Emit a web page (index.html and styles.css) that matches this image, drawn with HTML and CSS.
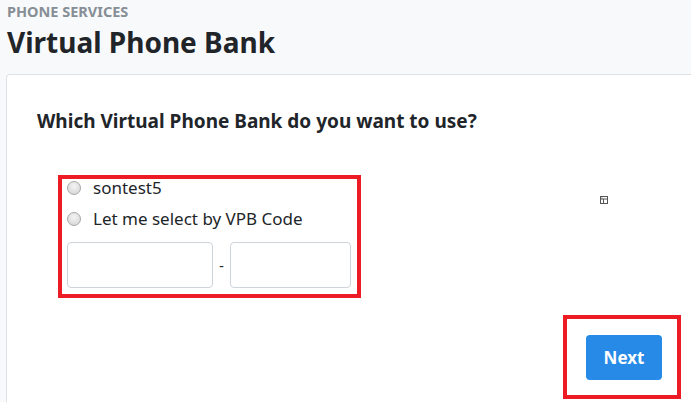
FILE: index.html
```html
<!DOCTYPE html>
<html lang="en">
<head>
    <meta charset="UTF-8">
    <meta name="viewport" content="width=device-width, initial-scale=1.0">
    <title>Virtual Phone Bank</title>
    <link rel="stylesheet" href="styles.css">
</head>
<body>
    <header class="page-header">
        <div class="eyebrow">Phone Services</div>
        <h1>Virtual Phone Bank</h1>
    </header>

    <form class="card" id="vpbForm">
        <h2 class="question">Which Virtual Phone Bank do you want to use?</h2>

        <div class="vpb-row">
            <div class="choices">
                <label class="radio-option">
                    <input type="radio" name="vpb" value="sontest5">
                    <span>sontest5</span>
                </label>
                <label class="radio-option">
                    <input type="radio" name="vpb" value="code">
                    <span>Let me select by VPB Code</span>
                </label>
                <div class="code-inputs">
                    <input type="text" class="code-input code-first" name="codeA">
                    <span class="dash">-</span>
                    <input type="text" class="code-input code-second" name="codeB">
                </div>
            </div>

            <svg class="tiny-icon" width="8" height="8" viewBox="0 0 8 8">
                <rect x="0.5" y="0.5" width="7" height="7" fill="none" stroke="#555" stroke-width="1"/>
                <line x1="0" y1="3" x2="8" y2="3" stroke="#555" stroke-width="1"/>
                <line x1="3.5" y1="3" x2="3.5" y2="8" stroke="#555" stroke-width="1"/>
                <rect x="1.5" y="1.5" width="1" height="1" fill="#555"/>
            </svg>
        </div>

        <div class="actions">
            <button type="submit" class="btn-next">Next</button>
        </div>
    </form>

    <!-- annotation boxes drawn over the screenshot -->
    <div class="highlight highlight-choices"></div>
    <div class="highlight highlight-next"></div>
</body>
</html>
```

FILE: styles.css
```css
body {
    font-family: "Noto Sans", "Open Sans", sans-serif;
    margin: 0;
    padding: 0;
    background-color: #f8f9fa;
    color: #212529;
    overflow: hidden;
}

.page-header {
    padding: 2px 7px 0;
    height: 74px;
    box-sizing: border-box;
}

.eyebrow {
    font-size: 14.5px;
    font-weight: bold;
    color: #868e96;
    text-transform: uppercase;
    line-height: 19px;
}

h1 {
    margin: 3px 0 0;
    font-size: 28px;
    line-height: 36px;
    font-weight: bold;
}

.card {
    margin-left: 6px;
    background: #ffffff;
    border: 1px solid #dee2e6;
    border-right: none;
    border-radius: 4px 0 0 0;
    padding: 33px 0 0 30px;
    height: 340px;
    box-sizing: border-box;
}

.question {
    margin: 0;
    font-size: 19px;
    line-height: 26px;
    font-weight: bold;
}

.vpb-row {
    display: flex;
    align-items: flex-start;
    margin-top: 38px;
    padding-left: 30px;
}

.choices {
    width: 300px;
}

.radio-option {
    display: flex;
    align-items: center;
    height: 31px;
    font-size: 17px;
    gap: 12px;
}

.radio-option input {
    appearance: none;
    width: 14px;
    height: 14px;
    margin: 0;
    border: 1px solid #a9a9a9;
    border-radius: 50%;
    background: radial-gradient(circle at 50% 35%, #f4f4f4 0%, #dcdcdc 70%, #cfcfcf 100%);
    box-sizing: border-box;
}

.code-inputs {
    display: flex;
    align-items: center;
    margin-top: 8px;
}

.code-input {
    height: 46px;
    box-sizing: border-box;
    border: 1px solid #ced4da;
    border-radius: 4px;
    background: #ffffff;
}

.code-first {
    width: 146px;
}

.code-second {
    width: 121px;
}

.dash {
    width: 17px;
    text-align: center;
    font-size: 14px;
}

.tiny-icon {
    margin-left: 233px;
    margin-top: 24px;
}

.actions {
    display: flex;
    justify-content: flex-end;
    padding-right: 29px;
    margin-top: 47px;
}

.btn-next {
    background-color: #268ae6;
    color: white;
    border: none;
    width: 76px;
    height: 45px;
    border-radius: 4px;
    font-family: inherit;
    font-size: 17px;
    font-weight: bold;
    cursor: pointer;
}

.highlight {
    position: absolute;
    border: 4px solid #ed1c24;
    box-sizing: border-box;
}

.highlight-choices {
    left: 58px;
    top: 175px;
    width: 303px;
    height: 123px;
}

.highlight-next {
    left: 563px;
    top: 315px;
    width: 118px;
    height: 84px;
}
```
